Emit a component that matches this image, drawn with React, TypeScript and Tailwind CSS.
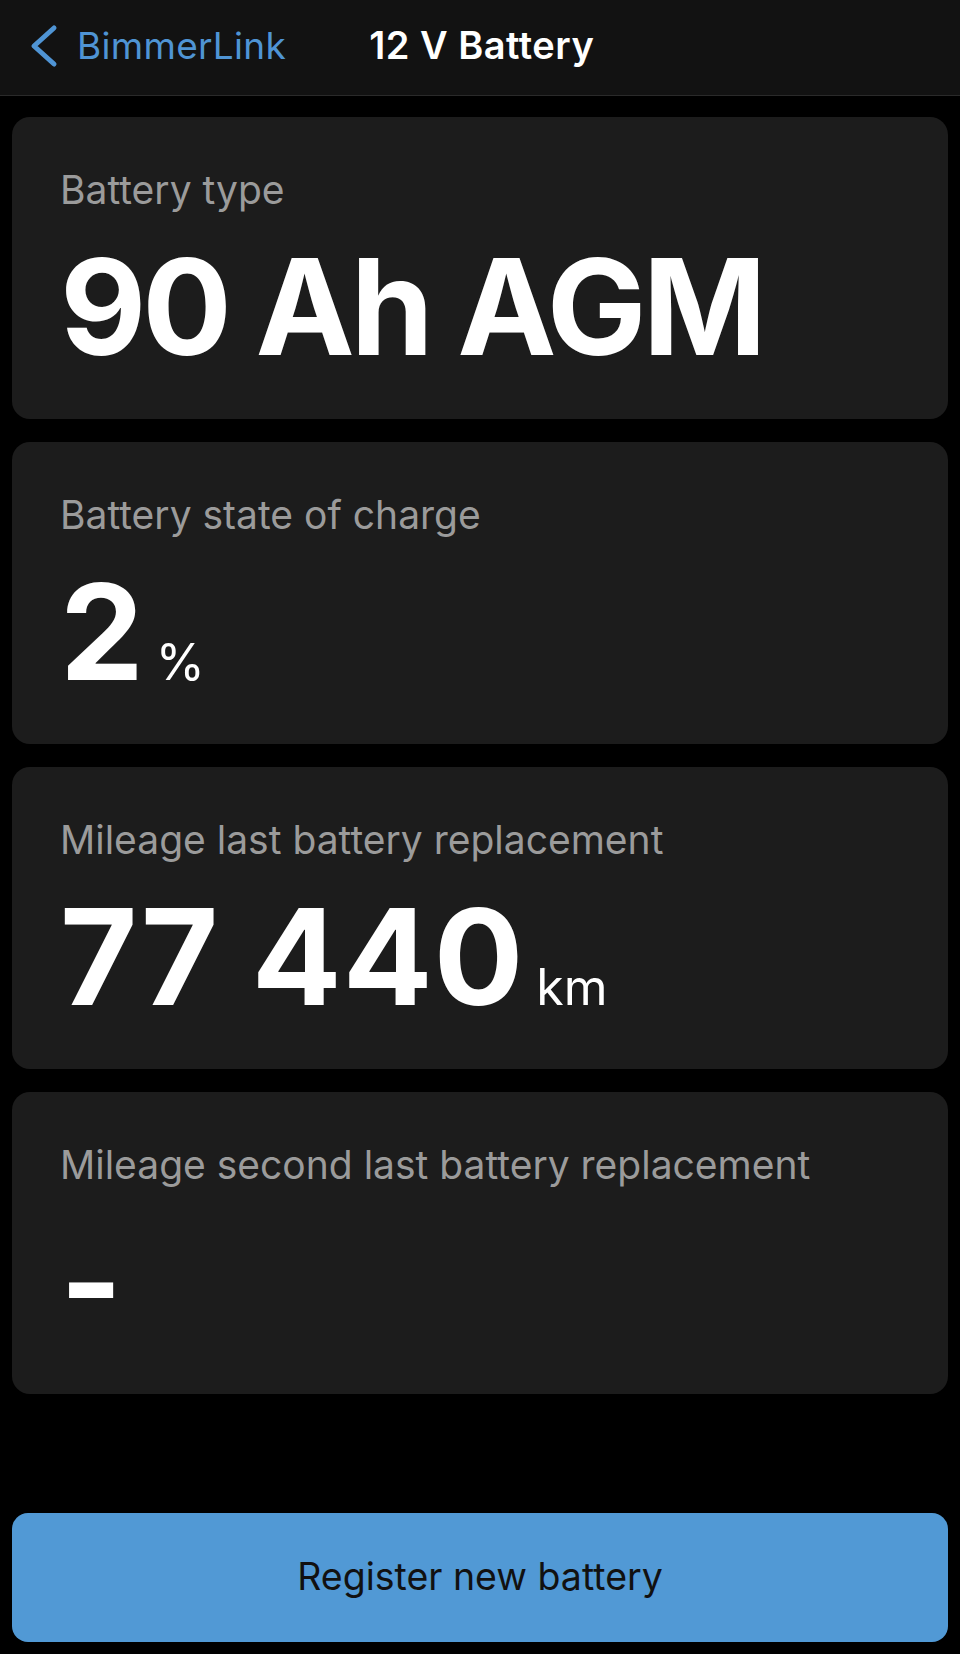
import React from "react";

function Card({ label, children }: { label: string; children: React.ReactNode }) {
  return (
    <div className="h-[302px] rounded-[18px] bg-[#1c1c1c] pl-12 pr-6 pt-[50px]">
      <div className="text-[39px] leading-[46px] text-[#9b9b9b]">{label}</div>
      <div className="mt-[27px] flex items-baseline">{children}</div>
    </div>
  );
}

export default function App() {
  return (
    <div
      className="flex min-h-[1654px] w-[960px] flex-col bg-black text-white"
      style={{ fontFamily: "Inter, 'Noto Sans', sans-serif" }}
    >
      <header className="flex h-[96px] items-center border-b border-[#2a2a2a] bg-[#121212] pb-1">
        <svg width="40" height="44" viewBox="0 0 40 44" className="ml-[22px]">
          <polyline
            points="32,4 12,22 32,40"
            fill="none"
            stroke="#4f94d4"
            strokeWidth="5"
            strokeLinecap="round"
            strokeLinejoin="round"
          />
        </svg>
        <span className="ml-[15px] text-[37px] tracking-[0.3px] text-[#4f94d4]">BimmerLink</span>
        <span className="ml-[83px] text-[38px] font-semibold tracking-[0.5px] text-white">12 V Battery</span>
      </header>

      <main className="flex flex-1 flex-col px-3 pt-[21px] pb-3">
        <div className="flex flex-col gap-[23px]">
          <Card label="Battery type">
            <span className="text-[133px] font-bold leading-[133px] tracking-[-4px]">90 Ah AGM</span>
          </Card>
          <Card label="Battery state of charge">
            <span className="text-[133px] font-bold leading-[133px] tracking-[-2px]">2</span>
            <span className="ml-[14px] text-[50px] leading-none">%</span>
          </Card>
          <Card label="Mileage last battery replacement">
            <span className="text-[133px] font-bold leading-[133px] tracking-[1px]">77 440</span>
            <span className="ml-[12px] text-[50px] leading-none">km</span>
          </Card>
          <Card label="Mileage second last battery replacement">
            <span className="text-[133px] font-bold leading-[133px]">-</span>
          </Card>
        </div>
        <div className="flex-1" />
        <button className="h-[129px] w-full rounded-[16px] bg-[#5199d5] text-[37.5px] text-[#111111]">
          Register new battery
        </button>
      </main>
    </div>
  );
}
